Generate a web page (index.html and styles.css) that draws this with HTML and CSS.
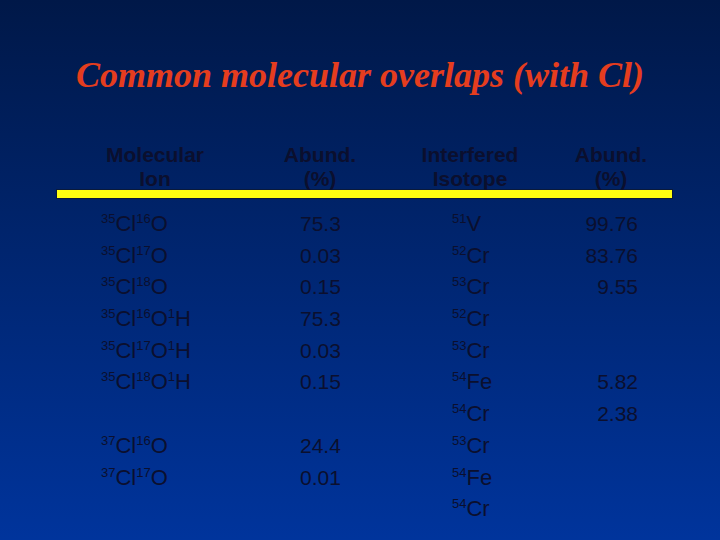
FILE: index.html
```html
<!DOCTYPE html>
<html lang="en">
<head>
    <meta charset="UTF-8">
    <meta name="viewport" content="width=device-width, initial-scale=1.0">
    <title>Common molecular overlaps</title>
    <link rel="stylesheet" href="styles.css">
</head>
<body>
    <div class="slide">
        <h1 class="title">Common molecular overlaps (with Cl)</h1>

        <div class="grid head">
            <div>Molecular<br>Ion</div>
            <div>Abund.<br>(%)</div>
            <div>Interfered<br>Isotope</div>
            <div>Abund.<br>(%)</div>
        </div>
        <div class="rule"></div>

        <div class="grid rows">
            <div class="ion"><sup>35</sup>Cl<sup>16</sup>O</div>
            <div class="num">75.3</div>
            <div class="iso"><sup>51</sup>V</div>
            <div class="num right">99.76</div>

            <div class="ion"><sup>35</sup>Cl<sup>17</sup>O</div>
            <div class="num">0.03</div>
            <div class="iso"><sup>52</sup>Cr</div>
            <div class="num right">83.76</div>

            <div class="ion"><sup>35</sup>Cl<sup>18</sup>O</div>
            <div class="num">0.15</div>
            <div class="iso"><sup>53</sup>Cr</div>
            <div class="num right">9.55</div>

            <div class="ion"><sup>35</sup>Cl<sup>16</sup>O<sup>1</sup>H</div>
            <div class="num">75.3</div>
            <div class="iso"><sup>52</sup>Cr</div>
            <div class="num right"></div>

            <div class="ion"><sup>35</sup>Cl<sup>17</sup>O<sup>1</sup>H</div>
            <div class="num">0.03</div>
            <div class="iso"><sup>53</sup>Cr</div>
            <div class="num right"></div>

            <div class="ion"><sup>35</sup>Cl<sup>18</sup>O<sup>1</sup>H</div>
            <div class="num">0.15</div>
            <div class="iso"><sup>54</sup>Fe</div>
            <div class="num right">5.82</div>

            <div class="ion"></div>
            <div class="num"></div>
            <div class="iso"><sup>54</sup>Cr</div>
            <div class="num right">2.38</div>

            <div class="ion"><sup>37</sup>Cl<sup>16</sup>O</div>
            <div class="num">24.4</div>
            <div class="iso"><sup>53</sup>Cr</div>
            <div class="num right"></div>

            <div class="ion"><sup>37</sup>Cl<sup>17</sup>O</div>
            <div class="num">0.01</div>
            <div class="iso"><sup>54</sup>Fe</div>
            <div class="num right"></div>

            <div class="ion"></div>
            <div class="num"></div>
            <div class="iso"><sup>54</sup>Cr</div>
            <div class="num right"></div>
        </div>
    </div>
</body>
</html>
```

FILE: styles.css
```css
body {
    margin: 0;
    font-family: "Liberation Sans", Arial, sans-serif;
    color: #0b0f2e;
}

.slide {
    width: 720px;
    height: 540px;
    overflow: hidden;
    background: linear-gradient(to bottom, #001848 0%, #002672 50%, #00349c 100%);
    padding-top: 55px;
    box-sizing: border-box;
}

.title {
    margin: 0 0 48px 0;
    font-family: "Liberation Serif", "Times New Roman", serif;
    font-style: italic;
    font-weight: bold;
    font-size: 36px;
    line-height: 40px;
    text-align: center;
    color: #e53d1e;
}

.grid {
    display: grid;
    grid-template-columns: 196px 134px 166px 116px;
    margin-left: 57px;
}

.head {
    font-weight: bold;
    font-size: 21px;
    line-height: 24px;
    text-align: center;
    margin-bottom: -2px;
}

.rule {
    margin-left: 57px;
    width: 615px;
    height: 8px;
    background: #ffff10;
    border: 1px solid #0a1a3a;
    box-sizing: content-box;
    margin-left: 56px;
}

.rows {
    margin-top: 9px;
    grid-auto-rows: 31.7px;
    line-height: 31.7px;
}

.ion {
    font-size: 22px;
    padding-left: 44px;
}

.iso {
    font-size: 22px;
    padding-left: 65px;
}

.num {
    font-size: 21px;
    padding-left: 47px;
}

.num.right {
    padding-left: 0;
    padding-right: 31px;
    text-align: right;
}

sup {
    font-size: 13px;
    line-height: 0;
    vertical-align: 8px;
}
```
